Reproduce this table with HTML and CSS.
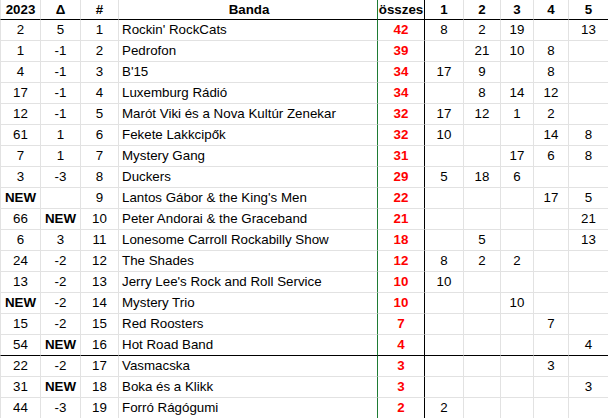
FILE: index.html
```html
<!DOCTYPE html>
<html lang="hu">
<head>
<meta charset="utf-8">
<title>Banda</title>
<link rel="stylesheet" href="styles.css">
</head>
<body>
<div class="sheet">
  <div class="row head">
    <div class="c">2023</div><div class="c">Δ</div><div class="c">#</div><div class="c name">Banda</div><div class="c sum">összes</div><div class="c">1</div><div class="c">2</div><div class="c">3</div><div class="c">4</div><div class="c">5</div>
  </div>
  <div class="row"><div class="c">2</div><div class="c">5</div><div class="c">1</div><div class="c name">Rockin' RockCats</div><div class="c sum">42</div><div class="c">8</div><div class="c">2</div><div class="c">19</div><div class="c"></div><div class="c">13</div></div>
  <div class="row"><div class="c">1</div><div class="c">-1</div><div class="c">2</div><div class="c name">Pedrofon</div><div class="c sum">39</div><div class="c"></div><div class="c">21</div><div class="c">10</div><div class="c">8</div><div class="c"></div></div>
  <div class="row"><div class="c">4</div><div class="c">-1</div><div class="c">3</div><div class="c name">B'15</div><div class="c sum">34</div><div class="c">17</div><div class="c">9</div><div class="c"></div><div class="c">8</div><div class="c"></div></div>
  <div class="row"><div class="c">17</div><div class="c">-1</div><div class="c">4</div><div class="c name">Luxemburg Rádió</div><div class="c sum">34</div><div class="c"></div><div class="c">8</div><div class="c">14</div><div class="c">12</div><div class="c"></div></div>
  <div class="row"><div class="c">12</div><div class="c">-1</div><div class="c">5</div><div class="c name">Marót Viki és a Nova Kultúr Zenekar</div><div class="c sum">32</div><div class="c">17</div><div class="c">12</div><div class="c">1</div><div class="c">2</div><div class="c"></div></div>
  <div class="row"><div class="c">61</div><div class="c">1</div><div class="c">6</div><div class="c name">Fekete Lakkcipők</div><div class="c sum">32</div><div class="c">10</div><div class="c"></div><div class="c"></div><div class="c">14</div><div class="c">8</div></div>
  <div class="row"><div class="c">7</div><div class="c">1</div><div class="c">7</div><div class="c name">Mystery Gang</div><div class="c sum">31</div><div class="c"></div><div class="c"></div><div class="c">17</div><div class="c">6</div><div class="c">8</div></div>
  <div class="row"><div class="c">3</div><div class="c">-3</div><div class="c">8</div><div class="c name">Duckers</div><div class="c sum">29</div><div class="c">5</div><div class="c">18</div><div class="c">6</div><div class="c"></div><div class="c"></div></div>
  <div class="row"><div class="c new">NEW</div><div class="c"></div><div class="c">9</div><div class="c name">Lantos Gábor &amp; the King's Men</div><div class="c sum">22</div><div class="c"></div><div class="c"></div><div class="c"></div><div class="c">17</div><div class="c">5</div></div>
  <div class="row"><div class="c">66</div><div class="c new">NEW</div><div class="c">10</div><div class="c name">Peter Andorai &amp; the Graceband</div><div class="c sum">21</div><div class="c"></div><div class="c"></div><div class="c"></div><div class="c"></div><div class="c">21</div></div>
  <div class="row"><div class="c">6</div><div class="c">3</div><div class="c">11</div><div class="c name">Lonesome Carroll Rockabilly Show</div><div class="c sum">18</div><div class="c"></div><div class="c">5</div><div class="c"></div><div class="c"></div><div class="c">13</div></div>
  <div class="row"><div class="c">24</div><div class="c">-2</div><div class="c">12</div><div class="c name">The Shades</div><div class="c sum">12</div><div class="c">8</div><div class="c">2</div><div class="c">2</div><div class="c"></div><div class="c"></div></div>
  <div class="row"><div class="c">13</div><div class="c">-2</div><div class="c">13</div><div class="c name">Jerry Lee's Rock and Roll Service</div><div class="c sum">10</div><div class="c">10</div><div class="c"></div><div class="c"></div><div class="c"></div><div class="c"></div></div>
  <div class="row"><div class="c new">NEW</div><div class="c">-2</div><div class="c">14</div><div class="c name">Mystery Trio</div><div class="c sum">10</div><div class="c"></div><div class="c"></div><div class="c">10</div><div class="c"></div><div class="c"></div></div>
  <div class="row"><div class="c">15</div><div class="c">-2</div><div class="c">15</div><div class="c name">Red Roosters</div><div class="c sum">7</div><div class="c"></div><div class="c"></div><div class="c"></div><div class="c">7</div><div class="c"></div></div>
  <div class="row cut"><div class="c">54</div><div class="c new">NEW</div><div class="c">16</div><div class="c name">Hot Road Band</div><div class="c sum">4</div><div class="c"></div><div class="c"></div><div class="c"></div><div class="c"></div><div class="c">4</div></div>
  <div class="row"><div class="c">22</div><div class="c">-2</div><div class="c">17</div><div class="c name">Vasmacska</div><div class="c sum">3</div><div class="c"></div><div class="c"></div><div class="c"></div><div class="c">3</div><div class="c"></div></div>
  <div class="row"><div class="c">31</div><div class="c new">NEW</div><div class="c">18</div><div class="c name">Boka és a Klikk</div><div class="c sum">3</div><div class="c"></div><div class="c"></div><div class="c"></div><div class="c"></div><div class="c">3</div></div>
  <div class="row"><div class="c">44</div><div class="c">-3</div><div class="c">19</div><div class="c name">Forró Rágógumi</div><div class="c sum">2</div><div class="c">2</div><div class="c"></div><div class="c"></div><div class="c"></div><div class="c"></div></div>
</div>
</body>
</html>
```
FILE: styles.css
```css
html, body {
  margin: 0;
  padding: 0;
  background: #fff;
  overflow: hidden;
}
body {
  width: 608px;
  height: 418px;
  font-family: "Liberation Sans", Arial, sans-serif;
  font-size: 13.33px;
  color: #000;
}
.sheet {
  display: grid;
  grid-template-columns: 41px 40px 38px 259px 47px 39px 37px 33px 35px 40px;
  grid-template-rows: 20px;
  grid-auto-rows: 21px;
  width: 609px;
}
.row {
  display: contents;
}
.c {
  box-sizing: border-box;
  display: flex;
  align-items: center;
  justify-content: center;
  border-right: 1px solid #e2e2e2;
  border-bottom: 1px solid #e2e2e2;
  white-space: nowrap;
  overflow: hidden;
  padding: 0 1px;
  line-height: 16px;
}
.c:first-child {
  border-left: 1px solid #e2e2e2;
}
.c.name {
  justify-content: flex-start;
  padding-left: 3px;
  border-right-color: #1e7b34;
}
.head .c.name {
  justify-content: center;
}
.c.sum {
  border-right-color: #000;
  color: #ff0000;
  font-weight: bold;
  padding: 0;
}
.head .c {
  font-weight: bold;
  color: #000;
  border-bottom-color: #000;
}
.cut .c {
  border-bottom-color: #000;
}
.new {
  font-weight: bold;
}
```
